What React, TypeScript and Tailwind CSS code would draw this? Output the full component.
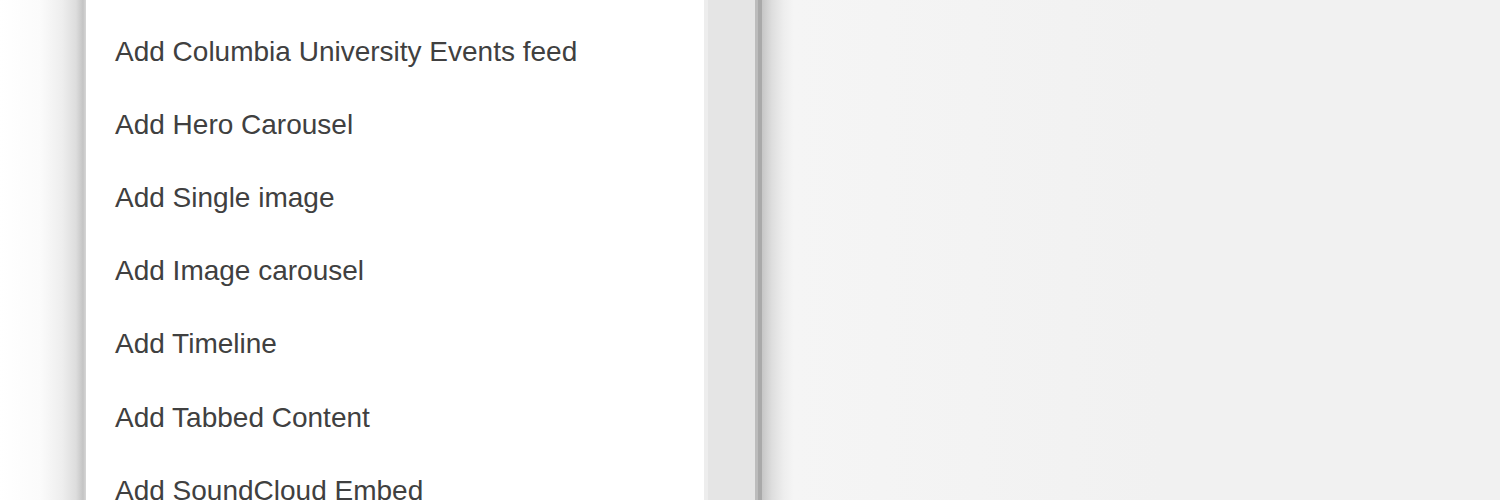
const items = [
  'Add Columbia University Events feed',
  'Add Hero Carousel',
  'Add Single image',
  'Add Image carousel',
  'Add Timeline',
  'Add Tabbed Content',
  'Add SoundCloud Embed',
];

export default function App() {
  return (
    <div className="flex h-[500px] overflow-hidden bg-[#f1f1f1] font-['Liberation_Sans',Arial,sans-serif]">
      {/* shadow gutter left of the menu */}
      <div className="w-[86px] shrink-0 bg-[linear-gradient(to_right,#ffffff_0px,#fbfbfb_40px,#eeeeee_62px,#dddddd_76px,#c4c4c4_83px,#d6d6d6_86px)]" />

      <div className="w-[618px] shrink-0 bg-white pt-[15px] pl-[29px]">
        {items.map(item => (
          <div key={item} className="flex h-[73.2px] items-center text-[28px] leading-none text-[#404040] whitespace-nowrap">
            {item}
          </div>
        ))}
      </div>

      <div className="w-[51px] shrink-0 border-l-[4px] border-[#ededed] bg-[#e5e5e5]" />
      <div className="w-[7px] shrink-0 bg-[linear-gradient(to_right,#bcbcbc_0px,#bcbcbc_3px,#a9a9a9_3px,#a9a9a9_7px)]" />

      <div className="flex-1 bg-[linear-gradient(to_right,#c6c6c6_0px,#dedede_10px,#eeeeee_22px,#f5f5f5_32px,#f4f4f4_120px,#f1f1f1_400px)]" />
    </div>
  );
}
